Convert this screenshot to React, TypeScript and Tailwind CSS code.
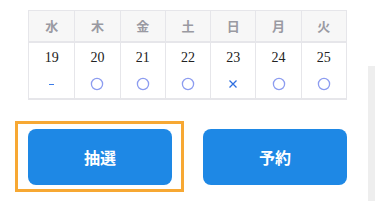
const days = [
	{ w: "水", d: "19", s: "-" },
	{ w: "木", d: "20", s: "o" },
	{ w: "金", d: "21", s: "o" },
	{ w: "土", d: "22", s: "o" },
	{ w: "日", d: "23", s: "x" },
	{ w: "月", d: "24", s: "o" },
	{ w: "火", d: "25", s: "o" },
];

const Mark = ({ s }: { s: string }) => {
	if (s === "o")
		return (
			<svg width="14" height="14" viewBox="0 0 14 14">
				<circle cx="7" cy="7" r="5.6" fill="none" stroke="#8c9cf0" strokeWidth="1.3" />
			</svg>
		);
	if (s === "x")
		return (
			<svg width="12" height="12" viewBox="0 0 12 12">
				<path d="M2.5 2.5 L9.5 9.5 M9.5 2.5 L2.5 9.5" stroke="#2f6fe0" strokeWidth="1.3" />
			</svg>
		);
	return <div className="h-[1px] w-[5px] bg-[#3b7be8]" />;
};

const App = () => {
	return (
		<div className="flex h-[201px] w-[375px] bg-white font-['Noto_Sans_CJK_JP',sans-serif]">
			<div className="w-[368px] shrink-0">
				<div className="ml-[28px] mt-[10px] w-[319px] border-x border-t border-b-2 border-[#e6e6ea]">
					<div className="grid grid-cols-7 border-b-2 border-[#e6e6ea] bg-[#f7f7f7]">
						{days.map((x, i) => (
							<div
								key={i}
								className={`flex h-[30px] items-center justify-center text-[13px] font-bold text-[#9a9aa2] ${i > 0 ? "border-l border-[#e6e6ea]" : ""}`}
							>
								{x.w}
							</div>
						))}
					</div>
					<div className="grid grid-cols-7">
						{days.map((x, i) => (
							<div
								key={i}
								className={`flex h-[55px] flex-col items-center ${i > 0 ? "border-l border-[#e6e6ea]" : ""}`}
							>
								<div className="mt-[6px] font-['Liberation_Serif',serif] text-[14px] leading-[18px] text-[#222]">
									{x.d}
								</div>
								<div className="mt-[10px] flex h-[14px] items-center">
									<Mark s={x.s} />
								</div>
							</div>
						))}
					</div>
				</div>
				<div className="mt-[21px] flex items-start">
					<div className="ml-[15px] border-[3px] border-[#f7a833] pb-[4px] pl-[10px] pr-[9px] pt-[5px]">
						<button className="flex h-[56px] w-[144px] items-center justify-center rounded-[8px] bg-[#1e88e5] text-[16px] font-bold text-white">
							抽選
						</button>
					</div>
					<button className="ml-[19px] mt-[8px] flex h-[56px] w-[144px] items-center justify-center rounded-[8px] bg-[#1e88e5] text-[16px] font-bold text-white">
						予約
					</button>
				</div>
			</div>
			<div className="mt-[66px] flex-1 bg-[#eeeeee]" />
		</div>
	);
};

export default App;
